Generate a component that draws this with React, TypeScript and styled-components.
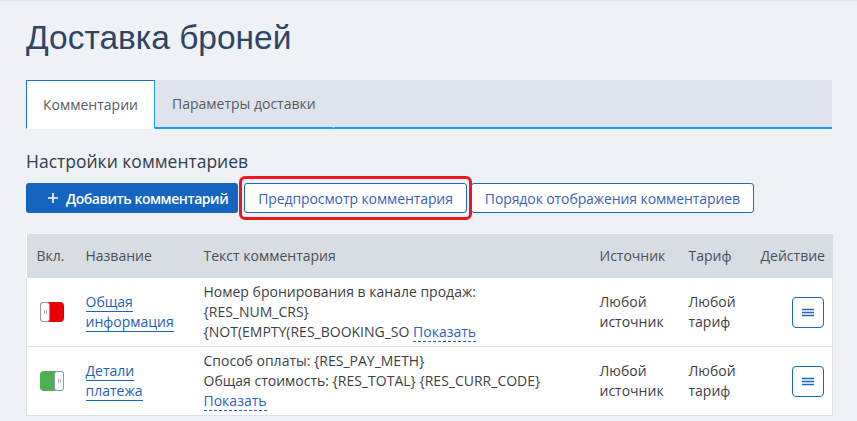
import styled, { createGlobalStyle } from 'styled-components';

const GlobalStyle = createGlobalStyle`
  html, body {
    margin: 0;
    padding: 0;
    background: #eef1f5;
  }

  body {
    font-family: 'Open Sans', 'Liberation Sans', sans-serif;
    color: #333;
  }
`;

type Comment = {
  enabled: boolean;
  name: string[];
  lines: string[];
  tail: string;
  source: string[];
  tariff: string[];
};

const comments: Comment[] = [
  {
    enabled: false,
    name: ['Общая', 'информация'],
    lines: ['Номер бронирования в канале продаж:', '{RES_NUM_CRS}'],
    tail: '{NOT(EMPTY(RES_BOOKING_SO ',
    source: ['Любой', 'источник'],
    tariff: ['Любой', 'тариф'],
  },
  {
    enabled: true,
    name: ['Детали', 'платежа'],
    lines: [
      'Способ оплаты: {RES_PAY_METH}',
      'Общая стоимость: {RES_TOTAL} {RES_CURR_CODE}',
    ],
    tail: '',
    source: ['Любой', 'источник'],
    tariff: ['Любой', 'тариф'],
  },
];

export default function App() {
  return (
    <Page>
      <GlobalStyle />
      <Title>Доставка броней</Title>

      <Tabs>
        <Tab active>Комментарии</Tab>
        <Tab>Параметры доставки</Tab>
        <TabFiller />
      </Tabs>

      <SectionTitle>Настройки комментариев</SectionTitle>

      <Toolbar>
        <PrimaryButton>
          <svg width="10" height="10" viewBox="0 0 10 10">
            <path d="M5 0v10M0 5h10" stroke="#fff" strokeWidth="1.6" />
          </svg>
          Добавить комментарий
        </PrimaryButton>
        <Highlight>
          <OutlineButton>Предпросмотр комментария</OutlineButton>
        </Highlight>
        <OutlineButton>Порядок отображения комментариев</OutlineButton>
      </Toolbar>

      <Table>
        <colgroup>
          <col style={{ width: 49 }} />
          <col style={{ width: 118 }} />
          <col style={{ width: 396 }} />
          <col style={{ width: 89 }} />
          <col style={{ width: 72 }} />
          <col style={{ width: 82 }} />
        </colgroup>
        <thead>
          <tr>
            <Th>Вкл.</Th>
            <Th>Название</Th>
            <Th>Текст комментария</Th>
            <Th>Источник</Th>
            <Th>Тариф</Th>
            <Th>Действие</Th>
          </tr>
        </thead>
        <tbody>
          {comments.map((c, i) => (
            <tr key={i}>
              <ToggleCell>
                <Toggle on={c.enabled}>
                  <Knob />
                </Toggle>
              </ToggleCell>
              <Td>
                {c.name.map((n) => (
                  <Line key={n}>
                    <NameLink>{n}</NameLink>
                  </Line>
                ))}
              </Td>
              <TextCell>
                {c.lines.map((l) => (
                  <Line key={l}>{l}</Line>
                ))}
                <Line>
                  {c.tail}
                  <ShowLink>Показать</ShowLink>
                </Line>
              </TextCell>
              <Td>
                {c.source.map((s) => (
                  <Line key={s}>{s}</Line>
                ))}
              </Td>
              <Td>
                {c.tariff.map((s) => (
                  <Line key={s}>{s}</Line>
                ))}
              </Td>
              <ActionCell>
                <MenuButton>
                  <svg width="12" height="9" viewBox="0 0 12 9">
                    <path
                      d="M0 1.5h12M0 4.5h12M0 7.5h12"
                      stroke="#1f66c2"
                      strokeWidth="1.4"
                    />
                  </svg>
                </MenuButton>
              </ActionCell>
            </tr>
          ))}
        </tbody>
      </Table>
    </Page>
  );
}

const Page = styled.div`
  min-height: 421px;
  padding: 18px 25px 0 26px;
  box-sizing: border-box;
  box-shadow: inset 0 2px 2px -1px rgba(0, 0, 0, 0.07);
`;

const Title = styled.h1`
  margin: 0;
  font-family: 'Liberation Sans', Arial, sans-serif;
  font-size: 33.5px;
  font-weight: 400;
  line-height: 40px;
  color: #2f4563;
`;

const Tabs = styled.div`
  display: flex;
  width: 806px;
  height: 49px;
  margin-top: 22px;
`;

const Tab = styled.div<{ active?: boolean }>`
  display: flex;
  align-items: center;
  padding: 0 ${(p) => (p.active ? '16px' : '17px')};
  font-size: 14px;
  color: #555c66;
  background: ${(p) => (p.active ? '#fff' : '#dfe3eb')};
  border: 1px solid ${(p) => (p.active ? '#1e6fd0' : 'transparent')};
  border-bottom: ${(p) => (p.active ? '1px solid #fff' : '2px solid #2196f3')};
  ${(p) => (p.active ? 'border-right-color: #2196f3;' : 'border-top: 0; border-left: 0;')}
  box-sizing: border-box;
`;

const TabFiller = styled.div`
  flex: 1;
  background: #dfe3eb;
  border-bottom: 2px solid #2196f3;
`;

const SectionTitle = styled.h2`
  margin: 21px 0 0;
  font-family: 'Open Sans', 'Liberation Sans', sans-serif;
  font-size: 17.5px;
  font-weight: 400;
  line-height: 22px;
  color: #333d4b;
`;

const Toolbar = styled.div`
  display: flex;
  align-items: center;
  margin-top: 11px;
`;

const PrimaryButton = styled.button`
  display: flex;
  align-items: center;
  gap: 8px;
  height: 30px;
  padding: 0 10px 0 22px;
  border: 0;
  border-radius: 3px;
  background: #1565c0;
  color: #fff;
  font-family: inherit;
  font-size: 14px;
  font-weight: 600;
  letter-spacing: -0.45px;
`;

const Highlight = styled.div`
  position: relative;
  display: flex;
  margin: 0 4px 0 6px;

  &::after {
    content: '';
    position: absolute;
    inset: -7px -5px;
    border: 3px solid #f0161e;
    border-radius: 6px;
    pointer-events: none;
  }
`;

const OutlineButton = styled.button`
  height: 30px;
  margin: 0;
  padding: 0 13px;
  border: 1px solid #1f66c2;
  border-radius: 3px;
  background: #fff;
  color: #3b5fb8;
  font-family: inherit;
  font-size: 14px;
  letter-spacing: -0.1px;
`;

const Table = styled.table`
  width: 806px;
  margin-top: 21px;
  table-layout: fixed;
  border-collapse: collapse;
  background: #fff;
  font-size: 14px;
  line-height: 20px;
`;

const Th = styled.th`
  height: 44px;
  padding: 0 10px;
  background: #d8dce3;
  color: #4a4f57;
  font-weight: 400;
  text-align: left;
`;

const Td = styled.td`
  padding: 4px 10px;
  border-bottom: 1px solid #dde1e7;
  vertical-align: middle;
  color: #3c3f44;

  &:first-child {
    border-left: 1px solid #dde1e7;
  }

  &:last-child {
    border-right: 1px solid #dde1e7;
  }
`;

const ToggleCell = styled(Td)`
  padding-left: 13px;
`;

const TextCell = styled(Td)`
  vertical-align: top;
  white-space: nowrap;
  overflow: hidden;
`;

const ActionCell = styled(Td)`
  padding-right: 8px;
  text-align: right;
`;

const Line = styled.div``;

const NameLink = styled.span`
  color: #1d5fb8;
  border-bottom: 1px solid #1565c0;
`;

const ShowLink = styled.span`
  color: #2d63c0;
  border-bottom: 1px dashed #2d63c0;
`;

const Toggle = styled.div<{ on: boolean }>`
  display: flex;
  flex-direction: ${(p) => (p.on ? 'row-reverse' : 'row')};
  width: 24px;
  height: 20px;
  border-radius: 4px;
  background: ${(p) => (p.on ? '#4caf50' : '#e80000')};
`;

const Knob = styled.div`
  position: relative;
  width: 10px;
  height: 20px;
  box-sizing: border-box;
  border: 1px solid #8d9ba8;
  border-radius: 3px;
  background: #fff;

  &::after {
    content: '';
    position: absolute;
    left: 3px;
    top: 7px;
    width: 1px;
    height: 4px;
    border-left: 1px solid #a9b2bb;
    border-right: 1px solid #a9b2bb;
  }
`;

const MenuButton = styled.button`
  display: inline-flex;
  align-items: center;
  justify-content: center;
  width: 32px;
  height: 31px;
  padding: 0;
  border: 1px solid #1f66c2;
  border-radius: 4px;
  background: #fff;
`;
